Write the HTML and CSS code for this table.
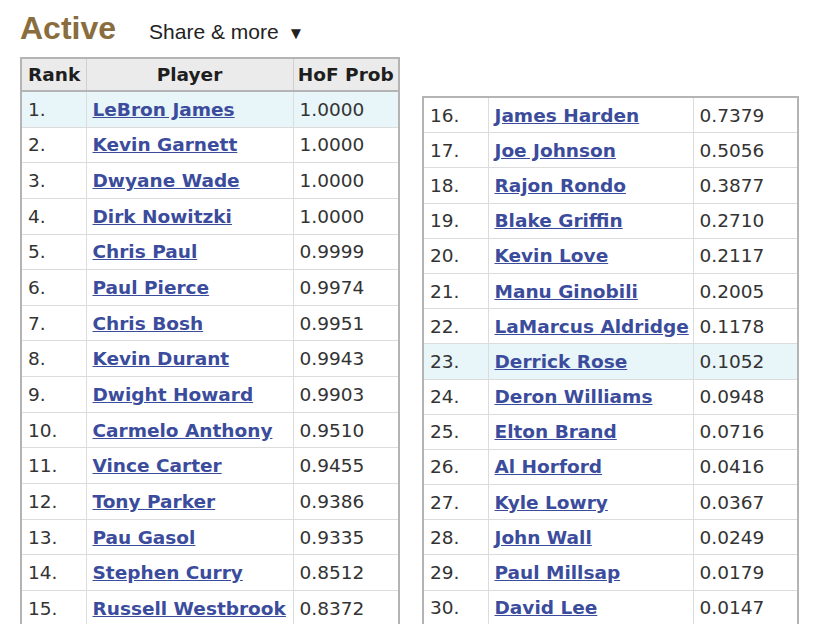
FILE: index.html
```html
<!DOCTYPE html>
<html>
<head>
<meta charset="utf-8">
<link rel="stylesheet" href="styles.css">
</head>
<body>
<div class="page">
  <div class="heading">
    <h1 class="title">Active</h1>
    <span class="share">Share &amp; more <span class="arrow">▼</span></span>
  </div>
  <div class="tables">
    <table class="stats left">
      <colgroup><col class="c-rank"><col class="c-player"><col class="c-prob"></colgroup>
      <thead>
        <tr><th class="th-rank">Rank</th><th>Player</th><th>HoF Prob</th></tr>
      </thead>
      <tbody>
        <tr class="hl"><td>1.</td><td><a href="#">LeBron James</a></td><td>1.0000</td></tr>
        <tr><td>2.</td><td><a href="#">Kevin Garnett</a></td><td>1.0000</td></tr>
        <tr><td>3.</td><td><a href="#">Dwyane Wade</a></td><td>1.0000</td></tr>
        <tr><td>4.</td><td><a href="#">Dirk Nowitzki</a></td><td>1.0000</td></tr>
        <tr><td>5.</td><td><a href="#">Chris Paul</a></td><td>0.9999</td></tr>
        <tr><td>6.</td><td><a href="#">Paul Pierce</a></td><td>0.9974</td></tr>
        <tr><td>7.</td><td><a href="#">Chris Bosh</a></td><td>0.9951</td></tr>
        <tr><td>8.</td><td><a href="#">Kevin Durant</a></td><td>0.9943</td></tr>
        <tr><td>9.</td><td><a href="#">Dwight Howard</a></td><td>0.9903</td></tr>
        <tr><td>10.</td><td><a href="#">Carmelo Anthony</a></td><td>0.9510</td></tr>
        <tr><td>11.</td><td><a href="#">Vince Carter</a></td><td>0.9455</td></tr>
        <tr><td>12.</td><td><a href="#">Tony Parker</a></td><td>0.9386</td></tr>
        <tr><td>13.</td><td><a href="#">Pau Gasol</a></td><td>0.9335</td></tr>
        <tr><td>14.</td><td><a href="#">Stephen Curry</a></td><td>0.8512</td></tr>
        <tr><td>15.</td><td><a href="#">Russell Westbrook</a></td><td>0.8372</td></tr>
      </tbody>
    </table>
    <table class="stats right">
      <colgroup><col class="c-rank"><col class="c-player"><col class="c-prob"></colgroup>
      <tbody>
        <tr><td>16.</td><td><a href="#">James Harden</a></td><td>0.7379</td></tr>
        <tr><td>17.</td><td><a href="#">Joe Johnson</a></td><td>0.5056</td></tr>
        <tr><td>18.</td><td><a href="#">Rajon Rondo</a></td><td>0.3877</td></tr>
        <tr><td>19.</td><td><a href="#">Blake Griffin</a></td><td>0.2710</td></tr>
        <tr><td>20.</td><td><a href="#">Kevin Love</a></td><td>0.2117</td></tr>
        <tr><td>21.</td><td><a href="#">Manu Ginobili</a></td><td>0.2005</td></tr>
        <tr><td>22.</td><td><a href="#">LaMarcus Aldridge</a></td><td>0.1178</td></tr>
        <tr class="hl"><td>23.</td><td><a href="#">Derrick Rose</a></td><td>0.1052</td></tr>
        <tr><td>24.</td><td><a href="#">Deron Williams</a></td><td>0.0948</td></tr>
        <tr><td>25.</td><td><a href="#">Elton Brand</a></td><td>0.0716</td></tr>
        <tr><td>26.</td><td><a href="#">Al Horford</a></td><td>0.0416</td></tr>
        <tr><td>27.</td><td><a href="#">Kyle Lowry</a></td><td>0.0367</td></tr>
        <tr><td>28.</td><td><a href="#">John Wall</a></td><td>0.0249</td></tr>
        <tr><td>29.</td><td><a href="#">Paul Millsap</a></td><td>0.0179</td></tr>
        <tr><td>30.</td><td><a href="#">David Lee</a></td><td>0.0147</td></tr>
      </tbody>
    </table>
  </div>
</div>
</body>
</html>
```
FILE: styles.css
```css
html, body {
  margin: 0;
  padding: 0;
  background: #fff;
}
.page {
  padding: 11px 0 0 20px;
}
.heading {
  display: flex;
  align-items: baseline;
  gap: 33px;
  height: 46px;
}
.title {
  margin: 0;
  font-family: "Liberation Sans", Arial, sans-serif;
  font-weight: bold;
  font-size: 32px;
  color: #8a6d3e;
  line-height: 34px;
}
.share {
  font-family: "Liberation Sans", Arial, sans-serif;
  font-size: 21px;
  color: #222;
}
.arrow {
  font-size: 17px;
  margin-left: 3px;
}
.tables {
  display: flex;
  align-items: flex-start;
  gap: 22px;
}
.stats {
  border-collapse: collapse;
  table-layout: fixed;
  font-family: "DejaVu Sans", Verdana, sans-serif;
  font-size: 18.5px;
  color: #333;
  border: 2px solid #b4b4b4;
}
.stats.right {
  margin-top: 39px;
}
.stats.left .c-rank { width: 65px; }
.stats.left .c-player { width: 207px; }
.stats.left .c-prob { width: 106px; }
.stats.right .c-rank { width: 65px; }
.stats.right .c-player { width: 205px; }
.stats.right .c-prob { width: 105px; }
.stats th {
  background: #ebebeb;
  font-weight: bold;
  color: #1e1e1e;
  height: 31px;
  padding: 0 2px;
  border: 1px solid #cfcfcf;
  border-bottom: 2px solid #b4b4b4;
  text-align: center;
  white-space: nowrap;
}
.stats th.th-rank {
  text-align: left;
  padding-left: 6px;
}
.stats td {
  height: 34.65px;
  padding: 0 0 0 6px;
  border: 1px solid #dcdcdc;
  white-space: nowrap;
}
.stats.right td {
  height: 34.2px;
}
.stats tr.hl td {
  background: #e8f5f9;
}
.stats a {
  color: #3b4c9c;
  font-weight: bold;
  text-decoration: underline;
}
```
